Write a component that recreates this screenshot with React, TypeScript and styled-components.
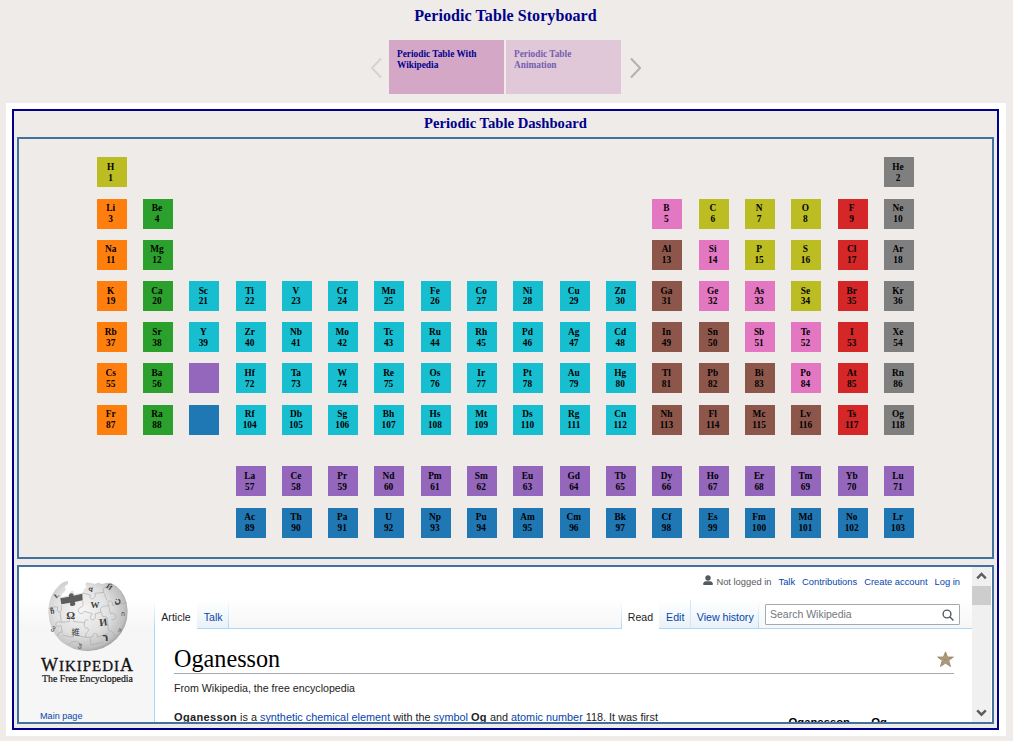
import React from "react";
import styled, { createGlobalStyle, css } from "styled-components";

const GlobalStyle = createGlobalStyle`
  *, *::before, *::after { box-sizing: border-box; }
  body { margin: 0; background: #eeebe8; overflow: hidden; }
`;

const serif = `"Liberation Serif", "Times New Roman", serif`;
const sans = `"Liberation Sans", Arial, sans-serif`;

const Page = styled.div`
  width: 1013px;
  height: 741px;
  background: #eeebe8;
  font-family: ${serif};
  overflow: hidden;
`;

const StoryHeader = styled.header`
  width: 1011px;
  height: 103px;
  display: flex;
  flex-direction: column;
  align-items: center;
  padding-top: 7px;
`;

const StoryTitle = styled.h1`
  margin: 0 0 15px;
  font-size: 16px;
  line-height: 18px;
  font-weight: bold;
  letter-spacing: 0.08px;
  color: #00008b;
`;

const StoryNav = styled.nav`
  display: flex;
  align-items: center;
  height: 54px;
`;

const StoryPoints = styled.div`
  display: flex;
  gap: 2px;
  margin: 0 8px 0 7px;
`;

const StoryPoint = styled.button<{ $active?: boolean }>`
  width: 115px;
  height: 54px;
  border: 0;
  padding: 9px 20px 0 8px;
  display: flex;
  align-items: flex-start;
  text-align: left;
  font: bold 9.33px/11px ${serif};
  background: ${(p) => (p.$active ? "#d4a7c7" : "#e1c8d9")};
  color: ${(p) => (p.$active ? "#00008b" : "#7460b0")};
`;

const Arrow = styled.svg<{ $dim?: boolean }>`
  width: 12px;
  height: 22px;
  margin-top: 2px;
  fill: none;
  stroke: ${(p) => (p.$dim ? "#d6d3d0" : "#b4b2b0")};
  stroke-width: 2;
`;

const Frame = styled.main`
  width: 1000px;
  height: 633px;
  margin-left: 6px;
  padding: 6px 7px 6px 6px;
  background: #fff;
`;

const Dashboard = styled.section`
  width: 987px;
  height: 621px;
  border: 2px solid #00008b;
  background: #eeebe8;
  padding: 0 3px;
  display: flex;
  flex-direction: column;
`;

const DashboardTitle = styled.h2`
  margin: 0;
  height: 26px;
  font-size: 14.67px;
  line-height: 25px;
  color: #00008b;
  text-align: center;
`;

const Panel = styled.div`
  border: 2px solid #41719c;
  overflow: hidden;
`;

const TablePanel = styled(Panel)`
  height: 422px;
  padding: 18.3px 0 0 77.6px;
`;

const WikiPanel = styled(Panel)`
  height: 159px;
  margin-top: 6px;
  background: #fff;
  display: flex;
  font-family: ${sans};
`;

const ElementGrid = styled.div`
  display: grid;
  grid-template-columns: repeat(18, 30px);
  grid-template-rows: repeat(7, 30px) 9.4px repeat(2, 30px);
  column-gap: 16.32px;
  row-gap: 11.23px;
`;

const Cell = styled.div<{ $row: number; $col: number; $color: string }>`
  grid-row: ${(p) => p.$row};
  grid-column: ${(p) => p.$col};
  background: ${(p) => p.$color};
  padding: 4.7px 1.8px 0 0;
  display: flex;
  flex-direction: column;
  align-items: center;
  font-size: 9.33px;
  line-height: 10.7px;
  font-weight: bold;
  color: #000;
`;

const palette: Record<string, string> = {
  n: "#bcbd22",
  a: "#ff7f0e",
  e: "#2ca02c",
  t: "#17becf",
  m: "#8c564b",
  s: "#e377c2",
  h: "#d62728",
  g: "#7f7f7f",
  l: "#9467bd",
  c: "#1f77b4",
};

type Run = { row: number; col: number; from: number; kinds: string; symbols: string };

const runs: Run[] = [
  { row: 1, col: 1, from: 1, kinds: "n", symbols: "H" },
  { row: 1, col: 18, from: 2, kinds: "g", symbols: "He" },
  { row: 2, col: 1, from: 3, kinds: "ae", symbols: "Li Be" },
  { row: 2, col: 13, from: 5, kinds: "snnnhg", symbols: "B C N O F Ne" },
  { row: 3, col: 1, from: 11, kinds: "ae", symbols: "Na Mg" },
  { row: 3, col: 13, from: 13, kinds: "msnnhg", symbols: "Al Si P S Cl Ar" },
  { row: 4, col: 1, from: 19, kinds: "aettttttttttmssnhg", symbols: "K Ca Sc Ti V Cr Mn Fe Co Ni Cu Zn Ga Ge As Se Br Kr" },
  { row: 5, col: 1, from: 37, kinds: "aettttttttttmmsshg", symbols: "Rb Sr Y Zr Nb Mo Tc Ru Rh Pd Ag Cd In Sn Sb Te I Xe" },
  { row: 6, col: 1, from: 55, kinds: "ae", symbols: "Cs Ba" },
  { row: 6, col: 4, from: 72, kinds: "tttttttttmmmshg", symbols: "Hf Ta W Re Os Ir Pt Au Hg Tl Pb Bi Po At Rn" },
  { row: 7, col: 1, from: 87, kinds: "ae", symbols: "Fr Ra" },
  { row: 7, col: 4, from: 104, kinds: "tttttttttmmmmhg", symbols: "Rf Db Sg Bh Hs Mt Ds Rg Cn Nh Fl Mc Lv Ts Og" },
  { row: 9, col: 4, from: 57, kinds: "lllllllllllllll", symbols: "La Ce Pr Nd Pm Sm Eu Gd Tb Dy Ho Er Tm Yb Lu" },
  { row: 10, col: 4, from: 89, kinds: "ccccccccccccccc", symbols: "Ac Th Pa U Np Pu Am Cm Bk Cf Es Fm Md No Lr" },
];

const WikiPage = styled.div`
  width: 953px;
  height: 155px;
  display: flex;
  background: linear-gradient(#fff 0, #fff 30px, #f6f6f6 62px);
`;

const Sidebar = styled.aside`
  width: 135px;
  flex: none;
  display: flex;
  flex-direction: column;
  padding-left: 21px;
`;

const Globe = styled.svg`
  width: 100px;
  height: 83px;
  margin-top: 3px;
  display: block;
  flex: none;
`;

const Wordmark = styled.div`
  width: 92px;
  margin-left: 1px;
  display: flex;
  align-items: baseline;
  justify-content: space-between;
  font: 15px/18px ${serif};
  color: #111;
  -webkit-text-stroke: 0.3px #111;
  white-space: nowrap;
  margin-top: 3px;
`;

const BigCap = styled.span`
  font-size: 18px;
`;

const Tagline = styled.div`
  margin-left: 2px;
  font: 9.8px/12px ${serif};
  color: #111;
  -webkit-text-stroke: 0.2px #111;
  white-space: nowrap;
  margin-top: -2px;
`;

const SideLink = styled.a`
  margin-top: 25px;
  font-size: 9.1px;
  line-height: 12px;
  color: #0645ad;
`;

const MainColumn = styled.div`
  flex: 1;
  display: flex;
  flex-direction: column;
  min-width: 0;
`;

const PersonalBar = styled.div`
  height: 33px;
  flex: none;
  padding: 8px 12px 0 0;
  display: flex;
  justify-content: flex-end;
  font-size: 9.35px;
  line-height: 14px;
  color: #54595d;
`;

const PersonalLink = styled.a`
  margin-left: 7px;
  color: #0645ad;
`;

const UserIcon = styled.svg`
  width: 10px;
  height: 11px;
  margin-right: 3px;
`;

const TabBar = styled.div`
  height: 29px;
  flex: none;
  display: flex;
  font-size: 10.6px;
`;

const fade = css`
  background: linear-gradient(#fff, #a7d7f9) left / 1px 100% no-repeat,
    linear-gradient(#fff, #a7d7f9) right / 1px 100% no-repeat;
`;

const TabGroup = styled.div`
  display: flex;
  ${fade}
  padding: 0 1px;
`;

const Tab = styled.a<{ $w: number; $selected?: boolean; $divider?: boolean }>`
  width: ${(p) => p.$w}px;
  padding-top: 11px;
  padding-left: ${(p) => (p.$selected ? 0 : 1.5)}px;
  line-height: 13px;
  text-align: center;
  white-space: nowrap;
  color: ${(p) => (p.$selected ? "#222" : "#0645ad")};
  background: ${(p) => (p.$selected ? "#fff" : "linear-gradient(#fff, #e8f2f8)")};
  border-bottom: 1px solid ${(p) => (p.$selected ? "#fff" : "#a7d7f9")};
  border-right: ${(p) => (p.$divider ? "1px solid #cfe7f8" : "0")};
`;

const TabSpacer = styled.div`
  flex: 1;
  border-bottom: 1px solid #a7d7f9;
`;

const SearchArea = styled.div`
  width: 213px;
  padding: 4px 0 0 6px;
  border-bottom: 1px solid #a7d7f9;
`;

const SearchBox = styled.div`
  width: 195px;
  height: 21px;
  border: 1px solid #a2a9b1;
  border-radius: 1px;
  background: #fff;
  color: #72777d;
  font-size: 10.5px;
  line-height: 19px;
  padding: 0 5px 0 4px;
  display: flex;
  justify-content: space-between;
  align-items: center;
`;

const SearchIcon = styled.svg`
  width: 12px;
  height: 12px;
`;

const Article = styled.article`
  flex: none;
  height: 93px;
  border-left: 1px solid #a7d7f9;
  background: #fff;
  padding: 17px 18px 0 19px;
  color: #222;
`;

const HeadingRow = styled.div`
  display: flex;
  justify-content: space-between;
  height: 28px;
  border-bottom: 1px solid #a2a9b1;
`;

const Heading = styled.h3`
  margin: 0;
  font: 24.2px/26px ${serif};
  color: #000;
`;

const Star = styled.svg`
  width: 17px;
  height: 17px;
  margin-top: 5px;
`;

const Subtitle = styled.div`
  margin-top: 8px;
  font-size: 10.65px;
  line-height: 13px;
`;

const BodyRow = styled.div`
  display: flex;
  margin-top: 15px;
  white-space: nowrap;
`;

const Lead = styled.p`
  margin: 0;
  width: 614.5px;
  font-size: 10.85px;
  line-height: 14px;

  a { color: #0645ad; }
  b { font-size: 11px; letter-spacing: 0.35px; }
`;

const InfoboxTitle = styled.div`
  display: flex;
  gap: 18px;
  font-size: 11.3px;
  line-height: 14px;
  font-weight: bold;
  color: #000;
  padding-top: 5px;
`;

const Scrollbar = styled.div`
  width: 19px;
  background: #f0f0f0;
  display: flex;
  flex-direction: column;
  align-items: center;
`;

const ScrollArrow = styled.svg`
  width: 19px;
  height: 19px;
  fill: none;
  stroke: #5c5c5c;
  stroke-width: 2.4;
`;

const Thumb = styled.div`
  width: 19px;
  height: 19px;
  background: #cdcdcd;
  margin-bottom: auto;
`;

function WikipediaGlobe() {
  return (
    <Globe viewBox="0 0 300 249">
      <defs>
        <radialGradient id="ball" cx="0.42" cy="0.42" r="0.64">
          <stop offset="0" stopColor="#f6f6f6" />
          <stop offset="0.55" stopColor="#e0e0e0" />
          <stop offset="0.85" stopColor="#c0c0c0" />
          <stop offset="1" stopColor="#8c8c8c" />
        </radialGradient>
      </defs>
      <path
        fill="url(#ball)"
        d="M84 33 Q68 34 56 48 Q25 76 25 126 Q27 180 62 214 Q100 245 145 243 Q195 241 229 207 Q264 170 263 122 Q261 75 229 48 Q216 38 203 38 L184 42 Q174 34 167 42 L139 37 Q134 46 140 52 Q128 58 130 68 L102 72 Q105 62 96 62 Q86 65 90 74 L64 82 Q62 74 70 68 Q82 60 74 52 Q76 44 84 43 Z"
      />
      <path
        fill="#5d5d5d"
        d="M61 85 L87 80 Q85 72 93 70 Q101 70 101 77 L127 71 L128 91 L104 96 Q110 107 98 108 Q87 108 91 98 L64 103 Z"
      />
      <g fill="none" stroke="#a6a6a6" strokeWidth="1.8">
        <path d="M25 115 Q42 108 54 111 Q48 124 58 126 Q68 124 63 106" />
        <path d="M128 93 Q132 111 122 112 Q110 117 117 128 Q128 135 132 124 L157 131 Q145 145 158 150 Q169 148 165 132 L183 126 Q177 114 190 109 L206 107 Q199 94 211 92 Q221 96 217 106 L260 98" />
        <path d="M60 126 L64 157 Q49 151 47 163 Q50 174 63 166 L67 187 Q53 184 54 198" />
        <path d="M64 157 L88 155 Q86 143 97 143 Q104 147 101 155 L134 158 Q134 145 145 151 M134 158 Q129 175 142 174 Q150 182 139 189 L136 202 L112 197 Q101 190 98 202 L68 195" />
        <path d="M136 202 L158 201 Q157 190 166 190 Q175 191 172 202 L205 190 M183 126 L188 140 Q205 137 202 151 L206 182 Q220 181 224 199" />
        <path d="M206 107 L211 131 Q225 127 228 139 Q225 151 215 149 M127 69 L151 75 Q147 88 160 86 Q170 81 165 70 L191 67 Q186 53 199 51 M191 67 L201 92" />
        <path d="M85 224 Q103 207 119 219 Q117 235 132 238 M150 202 L153 225 L190 216" />
      </g>
      <g fill="#3d3d3d" fontFamily={serif} textAnchor="middle">
        <text x="92" y="146" fontSize="33" fontWeight="bold">Ω</text>
        <text x="165" y="114" fontSize="27" fontWeight="bold">W</text>
        <text x="190" y="167" fontSize="31" fontWeight="bold" transform="rotate(-8 190 157)">И</text>
        <text x="107" y="196" fontSize="25" fontFamily='"Noto Sans CJK JP", sans-serif'>維</text>
        <text x="196" y="212" fontSize="31" fontWeight="bold" fontFamily='"DejaVu Sans", sans-serif'>ר</text>
        <text x="233" y="99" fontSize="27" fontWeight="bold" transform="rotate(-20 233 90)">ن</text>
        <text x="153" y="66" fontSize="22" fontWeight="bold" transform="rotate(14 153 58)">વ</text>
        <text x="208" y="58" fontSize="22" fontWeight="bold" transform="rotate(35 208 50)">Й</text>
        <text x="49" y="83" fontSize="20" fontWeight="bold" transform="rotate(-42 49 76)">Ł</text>
        <text x="37" y="132" fontSize="22" fontWeight="bold" transform="rotate(-12 37 124)">ჩ</text>
        <text x="42" y="181" fontSize="22" transform="rotate(30 42 174)">ვ</text>
        <text x="122" y="232" fontSize="20" transform="rotate(12 122 226)">უ</text>
        <text x="248" y="137" fontSize="20">ก</text>
        <text x="241" y="184" fontSize="17">த</text>
      </g>
    </Globe>
  );
}

function PeriodicTable() {
  return (
    <ElementGrid>
      {runs.flatMap((run) =>
        run.symbols.split(" ").map((symbol, i) => (
          <Cell key={symbol} $row={run.row} $col={run.col + i} $color={palette[run.kinds[i]]}>
            <span>{symbol}</span>
            <span>{run.from + i}</span>
          </Cell>
        ))
      )}
      <Cell $row={6} $col={3} $color={palette.l} />
      <Cell $row={7} $col={3} $color={palette.c} />
    </ElementGrid>
  );
}

function WikipediaView() {
  return (
    <WikiPanel>
      <WikiPage>
        <Sidebar>
          <WikipediaGlobe />
          <Wordmark>
            <BigCap>W</BigCap>
            <span>I</span>
            <span>K</span>
            <span>I</span>
            <span>P</span>
            <span>E</span>
            <span>D</span>
            <span>I</span>
            <BigCap>A</BigCap>
          </Wordmark>
          <Tagline>The Free Encyclopedia</Tagline>
          <SideLink>Main page</SideLink>
        </Sidebar>
        <MainColumn>
          <PersonalBar>
            <UserIcon viewBox="0 0 10 11">
              <circle cx="5" cy="3" r="2.7" fill="#54595d" />
              <path d="M0.3 10V8.2Q0.6 6.2 3 6.2H7Q9.4 6.2 9.7 8.2V10Z" fill="#54595d" />
            </UserIcon>
            <span>Not logged in</span>
            <PersonalLink>Talk</PersonalLink>
            <PersonalLink>Contributions</PersonalLink>
            <PersonalLink>Create account</PersonalLink>
            <PersonalLink>Log in</PersonalLink>
          </PersonalBar>
          <TabBar>
            <TabGroup>
              <Tab $w={42} $selected>Article</Tab>
              <Tab $w={31}>Talk</Tab>
            </TabGroup>
            <TabSpacer />
            <TabGroup>
              <Tab $w={37} $selected>Read</Tab>
              <Tab $w={32} $divider>Edit</Tab>
              <Tab $w={67}>View history</Tab>
            </TabGroup>
            <SearchArea>
              <SearchBox>
                <span>Search Wikipedia</span>
                <SearchIcon viewBox="0 0 12 12" fill="none" stroke="#54595d" strokeWidth="1.4">
                  <circle cx="5" cy="5" r="3.9" />
                  <path d="M7.8 7.8L11.4 11.4" />
                </SearchIcon>
              </SearchBox>
            </SearchArea>
          </TabBar>
          <Article>
            <HeadingRow>
              <Heading>Oganesson</Heading>
              <Star viewBox="0 0 17 17">
                <path
                  d="M8.5 0.8L10.6 6H16.4L11.8 9.6L13.6 15.6L8.5 12.2L3.4 15.6L5.2 9.6L0.6 6H6.4Z"
                  fill="#b29f83"
                  stroke="#8f7c62"
                  strokeWidth="0.7"
                />
                <path d="M8.5 2.5V8.8L15 6.4M8.5 8.8L12.6 14.4M8.5 8.8L4.2 14.4M8.5 8.8L2 6.4" stroke="#a08b6c" strokeWidth="0.8" fill="none" />
              </Star>
            </HeadingRow>
            <Subtitle>From Wikipedia, the free encyclopedia</Subtitle>
            <BodyRow>
              <Lead>
                <b>Oganesson</b> is a <a>synthetic chemical element</a> with the <a>symbol</a> <b>Og</b> and{" "}
                <a>atomic number</a> 118. It was first
              </Lead>
              <InfoboxTitle>
                <span>Oganesson,</span>
                <span>Og</span>
              </InfoboxTitle>
            </BodyRow>
          </Article>
        </MainColumn>
      </WikiPage>
      <Scrollbar>
        <ScrollArrow viewBox="0 0 19 19">
          <path d="M5.2 11.3L9.5 7L13.8 11.3" />
        </ScrollArrow>
        <Thumb />
        <ScrollArrow viewBox="0 0 19 19">
          <path d="M5.2 7.4L9.5 11.7L13.8 7.4" />
        </ScrollArrow>
      </Scrollbar>
    </WikiPanel>
  );
}

export default function App() {
  return (
    <Page>
      <GlobalStyle />
      <StoryHeader>
        <StoryTitle>Periodic Table Storyboard</StoryTitle>
        <StoryNav>
          <Arrow $dim viewBox="0 0 12 22">
            <path d="M11 1.5L2 11L11 20.5" />
          </Arrow>
          <StoryPoints>
            <StoryPoint $active>Periodic Table With Wikipedia</StoryPoint>
            <StoryPoint>Periodic Table Animation</StoryPoint>
          </StoryPoints>
          <Arrow viewBox="0 0 12 22">
            <path d="M2 1.5L11 11L2 20.5" />
          </Arrow>
        </StoryNav>
      </StoryHeader>
      <Frame>
        <Dashboard>
          <DashboardTitle>Periodic Table Dashboard</DashboardTitle>
          <TablePanel>
            <PeriodicTable />
          </TablePanel>
          <WikipediaView />
        </Dashboard>
      </Frame>
    </Page>
  );
}
